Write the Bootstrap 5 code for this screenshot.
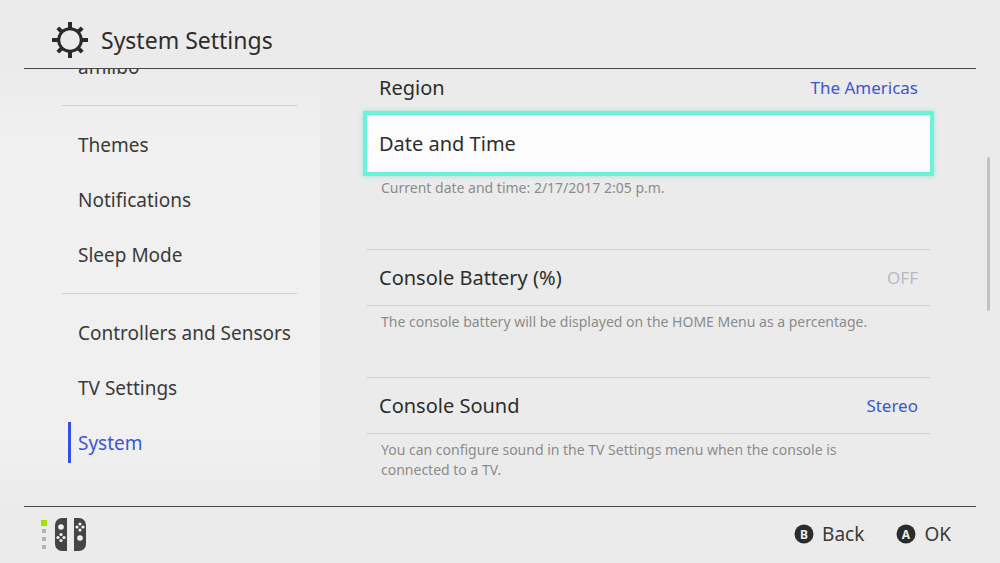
<!DOCTYPE html>
<html lang="en">
<head>
<meta charset="utf-8">
<meta name="viewport" content="width=device-width, initial-scale=1">
<title>System Settings</title>
<link href="https://cdn.jsdelivr.net/npm/bootstrap@5.3.0/dist/css/bootstrap.min.css" rel="stylesheet">
<style>
  body { background: #ebebeb; color: #2d2d2d; font-family: "Noto Sans", sans-serif; }
  .top-bar { height: 69px; border-bottom: 1px solid #4a4a4a; padding: 11px 27px 0; }
  .top-bar h1 { font-size: 23px; line-height: 32px; }
  .bottom-bar { height: 57px; border-top: 1px solid #4a4a4a; padding: 0 25px 2px 16px; }
  .edge { margin: 0 24px; }
  .pane { min-height: 0; }
  .side { width: 32%; padding: 0 23px 0 62px; background: linear-gradient(#ebebeb, #f0f0f0 15%, #f0f0f0 85%, #ebebeb); }
  .side ul { margin-top: -30px; }
  .side a { height: 55px; padding-left: 16px; font-size: 19px; line-height: 28px; color: #3a3a3a; }
  .side hr { margin: 11px 0; border-color: #d0d0d0; opacity: 1; }
  .side a.active { color: #3d55d8; }
  .side a.active::before { content: ""; width: 3px; height: 41px; margin: 0 7px 0 -10px; background: #3550de; }
  .options { padding: 0 57px 0 47px; min-width: 0; }
  .options > section:first-child { margin-top: -10px; }
  .opt { height: 57px; padding: 0 12px; background: none; border: 0; border-top: 1px solid #d0d0d0; border-bottom: 1px solid #d0d0d0; font-size: 20px; line-height: 28px; color: #2d2d2d; }
  .opt span + span { font-size: 17px; color: #3d55d8; }
  .opt span.off { color: #b9b9c2; }
  .opt.selected { background: #fdfdfd; border-color: #fdfdfd; box-shadow: 0 0 0 4px #6bf3da, 0 0 4px 5px #b5e8de; }
  .opt-stack { margin-top: -1px; }
  .note { margin: 0; padding: 6px 48px 45px 14px; font-size: 14px; line-height: 20px; color: #8b8b8b; }
  .note.tall { padding-bottom: 51px; }
  .scroll-rail { width: 13px; padding-top: 88px; }
  .scroll-thumb { width: 3px; height: 154px; border-radius: 2px; background: #c2c2c2; }
  .hint { font-size: 19px; line-height: 28px; color: #3a3a3a; }
</style>
</head>
<body class="d-flex flex-column vh-100 overflow-hidden">
<header class="top-bar edge d-flex align-items-center gap-2 flex-shrink-0">
  <svg width="38" height="38" viewBox="0 0 38 38" fill="none" stroke="#2b2b2b" aria-hidden="true">
    <circle cx="19" cy="19" r="11.3" stroke-width="3"/>
    <path stroke-width="4" d="M19 1v7M19 30v7M1 19h7M30 19h7M6.8 6.8l4.2 4.2M27 27l4.2 4.2M6.8 31.2l4.2-4.2M27 11l4.2-4.2"/>
  </svg>
  <h1 class="m-0 fw-normal ms-1">System Settings</h1>
</header>

<main class="pane d-flex flex-grow-1 overflow-hidden">
  <nav class="side flex-shrink-0 overflow-hidden" aria-label="Settings">
    <ul class="list-unstyled mb-0">
      <li><a href="#amiibo" class="d-flex align-items-center text-decoration-none">amiibo</a></li>
      <li><hr></li>
      <li><a href="#themes" class="d-flex align-items-center text-decoration-none">Themes</a></li>
      <li><a href="#notifications" class="d-flex align-items-center text-decoration-none">Notifications</a></li>
      <li><a href="#sleep" class="d-flex align-items-center text-decoration-none">Sleep Mode</a></li>
      <li><hr></li>
      <li><a href="#controllers" class="d-flex align-items-center text-decoration-none">Controllers and Sensors</a></li>
      <li><a href="#tv" class="d-flex align-items-center text-decoration-none">TV Settings</a></li>
      <li><a href="#system" class="active d-flex align-items-center text-decoration-none" aria-current="page">System</a></li>
    </ul>
  </nav>
  <div class="options flex-grow-1 overflow-hidden">
    <section>
      <button type="button" class="opt w-100 d-flex align-items-center justify-content-between"><span>Region</span><span>The Americas</span></button>
    </section>
    <section class="opt-stack">
      <button type="button" class="opt selected w-100 d-flex align-items-center"><span>Date and Time</span></button>
      <p class="note tall">Current date and time: 2/17/2017 2:05 p.m.</p>
    </section>
    <section>
      <button type="button" class="opt w-100 d-flex align-items-center justify-content-between"><span>Console Battery (%)</span><span class="off">OFF</span></button>
      <p class="note">The console battery will be displayed on the HOME Menu as a percentage.</p>
    </section>
    <section>
      <button type="button" class="opt w-100 d-flex align-items-center justify-content-between"><span>Console Sound</span><span>Stereo</span></button>
      <p class="note">You can configure sound in the TV Settings menu when the console is connected to a TV.</p>
    </section>
  </div>
  <div class="scroll-rail flex-shrink-0"><div class="scroll-thumb"></div></div>
</main>

<footer class="bottom-bar edge d-flex align-items-center justify-content-between flex-shrink-0">
  <svg width="48" height="36" viewBox="0 0 48 36" role="img" aria-label="Player 1, Joy-Con pair">
    <rect x="1" y="4" width="6" height="6" fill="#a5e000"/>
    <path fill="#b3b3b3" d="M2 13h4v4H2zM2 21h4v4H2zM2 29h4v4H2z"/>
    <path fill="#454545" d="M27 2v33h-5a7 7 0 0 1-7-7V9a7 7 0 0 1 7-7zM34 2h5a7 7 0 0 1 7 7v19a7 7 0 0 1-7 7h-5z"/>
    <g fill="#f4f4f4"><circle cx="21" cy="11" r="2.8"/><circle cx="40" cy="22" r="2.8"/>
    <circle cx="21" cy="18.5" r="1.6"/><circle cx="21" cy="24.5" r="1.6"/><circle cx="18" cy="21.5" r="1.6"/><circle cx="24" cy="21.5" r="1.6"/>
    <circle cx="40" cy="8" r="1.6"/><circle cx="40" cy="14" r="1.6"/><circle cx="37" cy="11" r="1.6"/><circle cx="43" cy="11" r="1.6"/></g>
  </svg>
  <div class="d-flex gap-4">
    <button type="button" class="hint btn p-0 border-0 d-flex align-items-center gap-2 me-2">
      <svg width="20" height="20" viewBox="0 0 20 20" aria-hidden="true"><circle cx="10" cy="10" r="9.5" fill="#2b2b2b"/><text x="10" y="14.5" text-anchor="middle" font-size="12" font-weight="700" fill="#ebebeb">B</text></svg>Back</button>
    <button type="button" class="hint btn p-0 border-0 d-flex align-items-center gap-2">
      <svg width="20" height="20" viewBox="0 0 20 20" aria-hidden="true"><circle cx="10" cy="10" r="9.5" fill="#2b2b2b"/><text x="10" y="14.5" text-anchor="middle" font-size="12" font-weight="700" fill="#ebebeb">A</text></svg>OK</button>
  </div>
</footer>
<script src="https://cdn.jsdelivr.net/npm/bootstrap@5.3.0/dist/js/bootstrap.bundle.min.js"></script>
</body>
</html>
